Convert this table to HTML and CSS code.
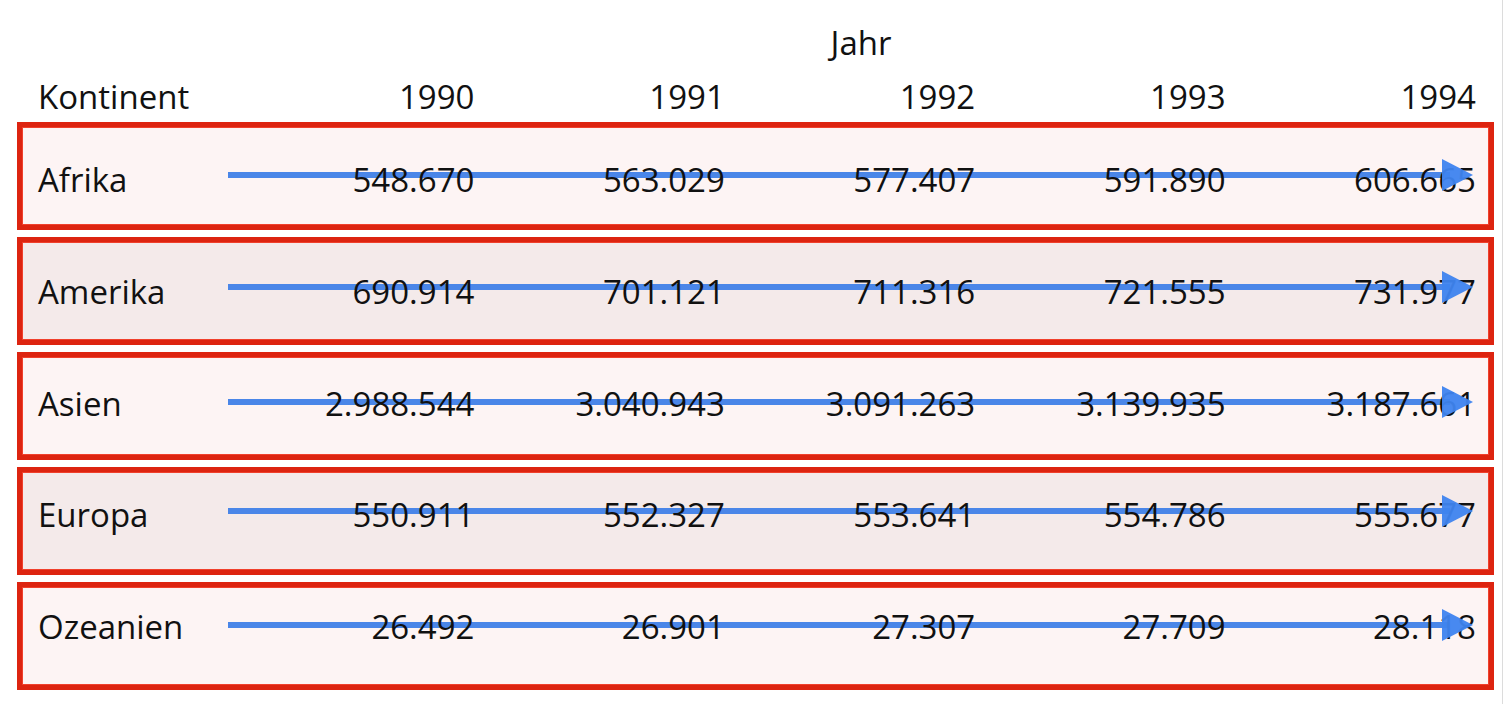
FILE: index.html
```html
<!DOCTYPE html>
<html lang="de">
<head>
<meta charset="utf-8">
<title>Kontinent / Jahr</title>
<link rel="stylesheet" href="styles.css">
</head>
<body>
<div class="page">
  <div class="table">
    <div class="hrow hrow-top">
      <div class="col-title">Jahr</div>
    </div>
    <div class="hrow">
      <div class="cell label">Kontinent</div>
      <div class="cell num">1990</div>
      <div class="cell num">1991</div>
      <div class="cell num">1992</div>
      <div class="cell num">1993</div>
      <div class="cell num">1994</div>
    </div>
    <div class="rows">
      <div class="row">
        <svg class="trend" viewBox="0 0 10 6" preserveAspectRatio="none" aria-hidden="true"><rect x="0" y="0" width="10" height="6" fill="currentColor"/></svg>
        <svg class="head" viewBox="0 0 31 32" aria-hidden="true"><polygon points="0,0 31,16 0,32" fill="currentColor"/></svg>
        <div class="cell label">Afrika</div>
        <div class="cell num">548.670</div>
        <div class="cell num">563.029</div>
        <div class="cell num">577.407</div>
        <div class="cell num">591.890</div>
        <div class="cell num">606.665</div>
      </div>
      <div class="row alt">
        <svg class="trend" viewBox="0 0 10 6" preserveAspectRatio="none" aria-hidden="true"><rect x="0" y="0" width="10" height="6" fill="currentColor"/></svg>
        <svg class="head" viewBox="0 0 31 32" aria-hidden="true"><polygon points="0,0 31,16 0,32" fill="currentColor"/></svg>
        <div class="cell label">Amerika</div>
        <div class="cell num">690.914</div>
        <div class="cell num">701.121</div>
        <div class="cell num">711.316</div>
        <div class="cell num">721.555</div>
        <div class="cell num">731.977</div>
      </div>
      <div class="row">
        <svg class="trend" viewBox="0 0 10 6" preserveAspectRatio="none" aria-hidden="true"><rect x="0" y="0" width="10" height="6" fill="currentColor"/></svg>
        <svg class="head" viewBox="0 0 31 32" aria-hidden="true"><polygon points="0,0 31,16 0,32" fill="currentColor"/></svg>
        <div class="cell label">Asien</div>
        <div class="cell num">2.988.544</div>
        <div class="cell num">3.040.943</div>
        <div class="cell num">3.091.263</div>
        <div class="cell num">3.139.935</div>
        <div class="cell num">3.187.661</div>
      </div>
      <div class="row alt">
        <svg class="trend" viewBox="0 0 10 6" preserveAspectRatio="none" aria-hidden="true"><rect x="0" y="0" width="10" height="6" fill="currentColor"/></svg>
        <svg class="head" viewBox="0 0 31 32" aria-hidden="true"><polygon points="0,0 31,16 0,32" fill="currentColor"/></svg>
        <div class="cell label">Europa</div>
        <div class="cell num">550.911</div>
        <div class="cell num">552.327</div>
        <div class="cell num">553.641</div>
        <div class="cell num">554.786</div>
        <div class="cell num">555.677</div>
      </div>
      <div class="row">
        <svg class="trend" viewBox="0 0 10 6" preserveAspectRatio="none" aria-hidden="true"><rect x="0" y="0" width="10" height="6" fill="currentColor"/></svg>
        <svg class="head" viewBox="0 0 31 32" aria-hidden="true"><polygon points="0,0 31,16 0,32" fill="currentColor"/></svg>
        <div class="cell label">Ozeanien</div>
        <div class="cell num">26.492</div>
        <div class="cell num">26.901</div>
        <div class="cell num">27.307</div>
        <div class="cell num">27.709</div>
        <div class="cell num">28.118</div>
      </div>
    </div>
  </div>
</div>
</body>
</html>
```

FILE: styles.css
```css
html, body {
  margin: 0;
  padding: 0;
  background: #ffffff;
}

body {
  font-family: "Open Sans", "Noto Sans", "Liberation Sans", sans-serif;
  font-size: 33px;
  line-height: 40px;
  color: #111111;
}

.page {
  width: 1503px;
  height: 704px;
  border-right: 1px solid #dcdcdc;
  box-sizing: border-box;
  padding-top: 23px;
}

.table {
  margin-left: 17px;
  width: 1477px;
}

.hrow {
  display: grid;
  grid-template-columns: 186px repeat(5, 1fr);
  padding: 0 18px 0 21px;
}

.hrow-top {
  margin-bottom: 14px;
}

.col-title {
  grid-column: 2 / -1;
  text-align: center;
  padding-left: 22px;
}

.rows {
  margin-top: 5px;
  display: flex;
  flex-direction: column;
  gap: 7px;
}

.row {
  --text-top: 33px;
  --line-top: 45px;
  position: relative;
  display: grid;
  grid-template-columns: 186px repeat(5, 1fr);
  height: 108px;
  box-sizing: border-box;
  border: 5px solid #dd2410;
  box-shadow: inset 0 0 0 1px #f0402c;
  padding: var(--text-top) 13px 0 16px;
  background: #fdf4f4;
}

.row:nth-child(2) { --text-top: 30px; --line-top: 42px; }
.row:nth-child(3) { --text-top: 27px; --line-top: 42px; }
.row:nth-child(4) { --text-top: 23px; --line-top: 36px; }
.row:nth-child(5) { --text-top: 20px; --line-top: 35px; }

.row.alt {
  background: #f4eaea;
}

.cell {
  position: relative;
  z-index: 1;
  white-space: nowrap;
}

.num {
  text-align: right;
}

.trend {
  position: absolute;
  left: 206px;
  top: var(--line-top);
  height: 6px;
  width: calc(100% - 245px);
  color: #4a86e8;
  z-index: 0;
}

.head {
  position: absolute;
  right: 16px;
  top: calc(var(--line-top) - 13px);
  width: 31px;
  height: 32px;
  color: #3f84f0;
  opacity: 0.95;
  z-index: 2;
}
```
